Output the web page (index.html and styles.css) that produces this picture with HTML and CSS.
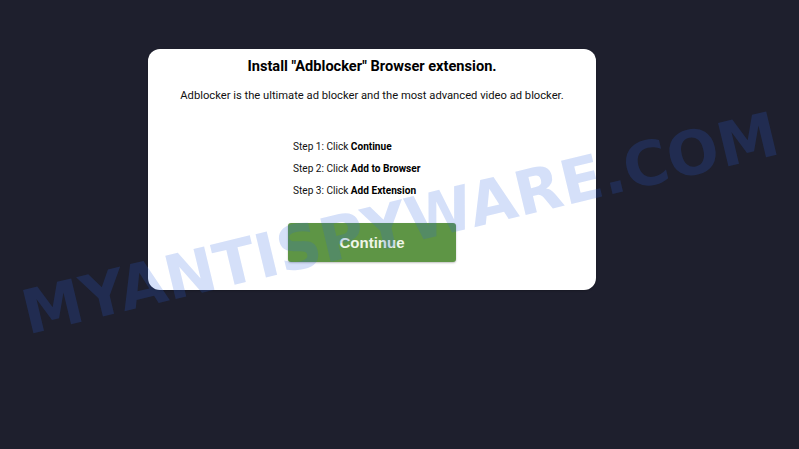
FILE: index.html
```html
<!DOCTYPE html>
<html lang="en">
<head>
    <meta charset="UTF-8">
    <meta name="viewport" content="width=device-width, initial-scale=1.0">
    <title>Install Adblocker</title>
    <link rel="stylesheet" href="styles.css">
</head>
<body>
    <div class="install-box">
        <h1>Install "Adblocker" Browser extension.</h1>
        <p class="intro">Adblocker is the ultimate ad blocker and the most advanced video ad blocker.</p>
        <ul class="steps">
            <li>Step 1: Click <strong>Continue</strong></li>
            <li>Step 2: Click <strong>Add to Browser</strong></li>
            <li>Step 3: Click <strong>Add Extension</strong></li>
        </ul>
        <button class="continue-button">Continue</button>
    </div>

    <div class="watermark">MYANTISPYWARE.COM</div>
</body>
</html>
```

FILE: styles.css
```css
body {
    font-family: Roboto, "Liberation Sans", sans-serif;
    margin: 0;
    padding: 0;
    background-color: #1e1f2d;
    color: #111;
    height: 449px;
    overflow: hidden;
}

.install-box {
    box-sizing: border-box;
    width: 448px;
    height: 241px;
    margin: 49px 0 0 148px;
    padding-top: 7px;
    background-color: white;
    border-radius: 12px;
    box-shadow: 0 1px 2px rgba(0, 0, 0, 0.2);
}

h1 {
    font-size: 14.6px;
    line-height: 20px;
    font-weight: bold;
    text-align: center;
    margin: 0;
    color: #000;
}

.intro {
    font-size: 11.2px;
    line-height: 18px;
    text-align: center;
    margin: 11px 0 0;
}

.steps {
    list-style-type: none;
    margin: 31px 0 0 145px;
    padding: 0;
    font-size: 10.1px;
    line-height: 22px;
}

.steps strong {
    color: #000;
}

.continue-button {
    display: block;
    width: 168px;
    height: 39px;
    margin: 21px 0 0 140px;
    background-color: #5e9545;
    color: #eef5e8;
    border: none;
    border-radius: 3px;
    box-shadow: 0 1px 2px rgba(0, 0, 0, 0.25);
    font-family: "Liberation Sans", Arial, sans-serif;
    font-size: 15px;
    font-weight: bold;
    cursor: pointer;
}

.continue-button:hover {
    background-color: #4f833a;
}

.watermark {
    position: absolute;
    left: 400px;
    top: 223px;
    transform: translate(-50%, -50%) rotate(-13.5deg);
    font-family: "DejaVu Sans", sans-serif;
    font-weight: bold;
    font-size: 61px;
    line-height: 1;
    white-space: nowrap;
    color: rgba(45, 100, 225, 0.2);
    pointer-events: none;
}
```
